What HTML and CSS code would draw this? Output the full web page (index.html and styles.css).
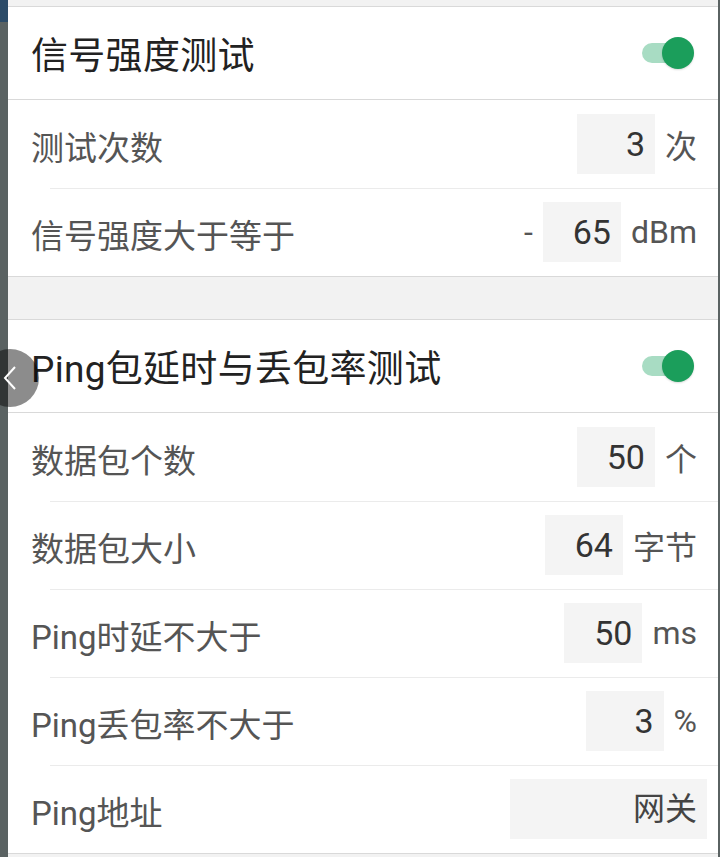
FILE: index.html
```html
<!DOCTYPE html>
<html>
<head>
  <meta charset="UTF-8">
  <meta name="viewport" content="width=device-width, initial-scale=1.0">
  <title>测试设置</title>
  <link rel="stylesheet" href="styles.css">
</head>
<body>
  <div class="edge"></div>
  <div class="panel">
    <!-- 信号强度 -->
    <div class="section">
      <div class="section-head">
        <span class="title">信号强度测试</span>
        <span class="switch on"></span>
      </div>
      <div class="row">
        <span class="label">测试次数</span>
        <div class="field"><span class="box">3</span><span class="unit">次</span></div>
      </div>
      <div class="row">
        <span class="label">信号强度大于等于</span>
        <div class="field"><span class="sign">-</span><span class="box">65</span><span class="unit">dBm</span></div>
      </div>
    </div>

    <div class="gap"></div>

    <!-- Ping -->
    <div class="section">
      <div class="section-head">
        <span class="title">Ping包延时与丢包率测试</span>
        <span class="switch on"></span>
      </div>
      <div class="row">
        <span class="label">数据包个数</span>
        <div class="field"><span class="box">50</span><span class="unit">个</span></div>
      </div>
      <div class="row">
        <span class="label">数据包大小</span>
        <div class="field"><span class="box">64</span><span class="unit">字节</span></div>
      </div>
      <div class="row">
        <span class="label">Ping时延不大于</span>
        <div class="field"><span class="box">50</span><span class="unit">ms</span></div>
      </div>
      <div class="row">
        <span class="label">Ping丢包率不大于</span>
        <div class="field"><span class="box">3</span><span class="unit">%</span></div>
      </div>
      <div class="row">
        <span class="label">Ping地址</span>
        <div class="field"><span class="box wide">网关</span></div>
      </div>
    </div>
  </div>

  <button class="back" type="button" aria-label="返回">
    <svg width="14" height="26" viewBox="0 0 14 26"><path d="M12 2 L2 13 L12 24" fill="none" stroke="#fff" stroke-width="2"/></svg>
  </button>
</body>
</html>
```

FILE: styles.css
```css
body {
  margin: 0;
  display: flex;
  min-height: 100vh;
  background-color: #5a6262;
  font-family: Roboto, "Noto Sans CJK SC", sans-serif;
  overflow: hidden;
}
.edge {
  width: 8px;
  flex-shrink: 0;
  background: linear-gradient(#2c4b68 0, #2c4b68 22px, #5a6262 22px);
}
.panel {
  flex: 1;
  background-color: #f2f2f2;
  padding-top: 6px;
  border-right: 2px solid #5a6262;
}
.section {
  background-color: #fff;
  border-top: 1px solid #d9d9d9;
  border-bottom: 1px solid #d9d9d9;
}
.section-head {
  height: 92px;
  display: flex;
  align-items: center;
  justify-content: space-between;
  padding: 0 24px 0 23px;
  border-bottom: 1px solid #d9d9d9;
}
.title {
  font-size: 37px;
  color: #222;
  letter-spacing: 0.3px;
}
.switch {
  position: relative;
  width: 52px;
  height: 32px;
}
.switch::before {
  content: "";
  position: absolute;
  left: 0;
  top: 6px;
  width: 42px;
  height: 20px;
  border-radius: 10px;
  background-color: #a8dcc3;
}
.switch::after {
  content: "";
  position: absolute;
  right: 0;
  top: 0;
  width: 32px;
  height: 32px;
  border-radius: 50%;
  background-color: #1b9e5b;
  box-shadow: 0 1px 2px rgba(0, 0, 0, 0.15);
}
.row {
  height: 88px;
  box-sizing: border-box;
  display: flex;
  align-items: center;
  justify-content: space-between;
  padding: 4px 21px 0 23px;
}
.row + .row {
  background: linear-gradient(#ebebeb, #ebebeb) no-repeat 42px 0 / calc(100% - 42px) 1px;
}
.label {
  font-size: 33px;
  color: #555;
}
.field {
  display: flex;
  align-items: center;
  margin-top: -4px;
}
.box {
  width: 78px;
  height: 60px;
  box-sizing: border-box;
  padding-right: 10px;
  background-color: #f4f4f4;
  text-align: right;
  font-size: 34px;
  line-height: 60px;
  color: #333;
}
.box.wide {
  width: 197px;
  margin-right: -10px;
  font-size: 32px;
  color: #444;
}
.unit {
  margin-left: 10px;
  font-size: 32px;
  color: #555;
}
.sign {
  margin-right: 10px;
  font-size: 32px;
  color: #555;
}
.gap {
  height: 42px;
}
.back {
  position: fixed;
  left: -19px;
  top: 349px;
  width: 58px;
  height: 58px;
  border: none;
  border-radius: 50%;
  background-color: rgba(0, 0, 0, 0.45);
  padding: 0 0 0 22px;
  display: flex;
  align-items: center;
}
```
